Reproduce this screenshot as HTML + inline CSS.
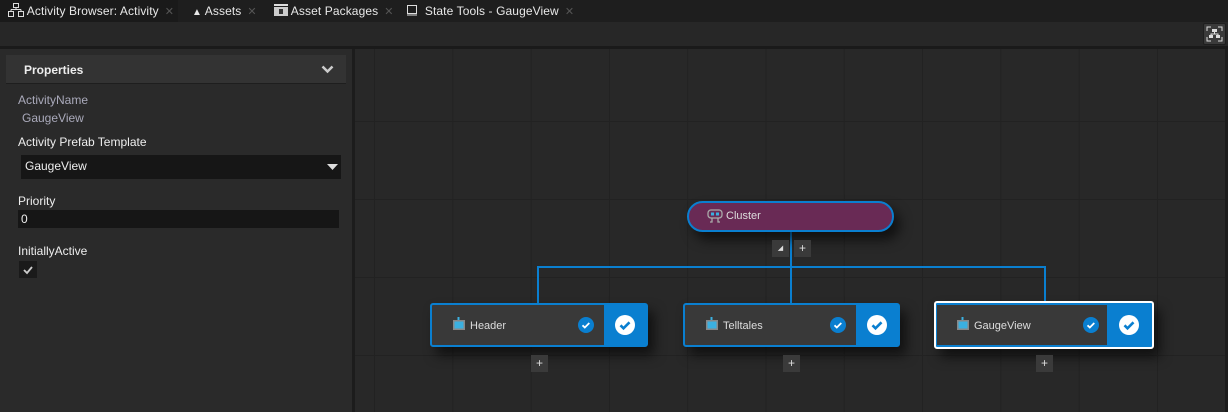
<!DOCTYPE html>
<html><head><meta charset="utf-8"><style>
*{margin:0;padding:0;box-sizing:border-box}
body{width:1228px;height:412px;background:#1e1e1e;font-family:"Liberation Sans",sans-serif;font-size:12px;color:#ddd;position:relative;overflow:hidden}
.abs{position:absolute}
.tab{position:absolute;top:0;height:22px;line-height:22px;font-size:12px;color:#e8e8e8;letter-spacing:0.1px}
.x{color:#555;font-size:11px;margin-left:6px}
.node{position:absolute;height:44px;border:2px solid #0a7fd0;border-radius:3px;background:#393939;box-shadow:6px 8px 12px rgba(0,0,0,.6)}
.node .blk{position:absolute;right:0;top:0;width:42px;height:40px;background:#0a7fd0}
.big{position:absolute;left:11px;top:10px;width:20px;height:20px;border-radius:50%;background:#fff}
.sm{position:absolute;width:16px;height:16px;border-radius:50%;background:#0a7fd0;top:12px}
.lbl{position:absolute;left:38px;top:15px;font-size:11px;color:#ddd}
.ic{position:absolute;left:20px;top:12px}
.plus{position:absolute;width:17px;height:17px;background:#3a3a3a;color:#ddd;font-size:12px;line-height:17px;text-align:center}
</style></head><body>
<!-- tabs -->
<div class="abs" style="left:0;top:0;width:178px;height:22px;background:#1a1a1a"></div>
<div class="tab" style="left:8px"><svg width="16" height="14" style="vertical-align:-2px" fill="none" stroke="#ddd"><rect x="5.5" y="0.5" width="5" height="4"/><path d="M8 4.5v2M3 6.5h10M3 6.5v2M13 6.5v2"/><rect x="0.5" y="8.5" width="5" height="5"/><rect x="10.5" y="8.5" width="5" height="5"/></svg> Activity Browser: Activity<span class="x">✕</span></div>
<div class="tab" style="left:192px"><span style="font-size:10px">▲</span> Assets<span class="x">✕</span></div>
<div class="tab" style="left:274px"><svg width="14" height="12" style="vertical-align:-1px"><rect x="0" y="0" width="14" height="2" fill="#ddd"/><rect x="0" y="3" width="14" height="9" fill="#ccc"/><rect x="5" y="5" width="4" height="5" fill="#333"/></svg> Asset Packages<span class="x">✕</span></div>
<div class="tab" style="left:406px"><svg width="12" height="12" style="vertical-align:-1px" fill="none" stroke="#ddd"><rect x="1.5" y="1.5" width="9" height="8"/><path d="M1 11h10"/></svg> &nbsp;State Tools - GaugeView<span class="x">✕</span></div>
<div class="abs" style="left:0;top:22px;width:1228px;height:24px;background:#272727"></div>
<div class="abs" style="left:0;top:46px;width:1228px;height:3px;background:#1a1a1a"></div>
<div class="abs" style="left:1203px;top:23px;width:23px;height:22px;background:#3a3a3a;border:1px solid #1e1e1e;border-radius:2px">
<svg width="21" height="20" fill="none" stroke="#ddd"><path d="M3 7V3h4M14 3h4v4M18 13v4h-4M7 17H3v-4"/><rect x="8" y="5" width="5" height="3" fill="#ddd" stroke="none"/><rect x="5" y="11" width="4" height="3" fill="#ddd" stroke="none"/><rect x="12" y="11" width="4" height="3" fill="#ddd" stroke="none"/><path d="M10.5 8v2M7 11V10h7v1"/></svg></div>
<!-- left panel -->
<div class="abs" style="left:0;top:49px;width:352px;height:363px;background:#2a2a2a"></div>
<div class="abs" style="left:6px;top:55px;width:340px;height:29px;background:#333;border-bottom:1px solid #1e1e1e"></div>
<div class="abs" style="left:24px;top:63px;font-weight:bold;font-size:12px;color:#eee">Properties</div>
<svg class="abs" style="left:321px;top:65px" width="13" height="9"><path d="M1.5 1.5l5 5 5-5" stroke="#ccc" stroke-width="2.5" fill="none"/></svg>
<div class="abs" style="left:18px;top:93px;color:#aab">ActivityName</div>
<div class="abs" style="left:22px;top:111px;color:#aab">GaugeView</div>
<div class="abs" style="left:18px;top:135px;color:#eee">Activity Prefab Template</div>
<div class="abs" style="left:21px;top:155px;width:320px;height:24px;background:#161616"></div>
<div class="abs" style="left:25px;top:159px;color:#eee">GaugeView</div>
<svg class="abs" style="left:327px;top:164px" width="11" height="6"><path d="M0 0h11L5.5 6z" fill="#ddd"/></svg>
<div class="abs" style="left:18px;top:194px;color:#eee">Priority</div>
<div class="abs" style="left:18px;top:210px;width:321px;height:18px;background:#161616"></div>
<div class="abs" style="left:21px;top:212px;color:#eee">0</div>
<div class="abs" style="left:18px;top:244px;color:#eee">InitiallyActive</div>
<div class="abs" style="left:19px;top:261px;width:18px;height:17px;background:#1a1a1a"><svg width="18" height="17"><path d="M5 9l3 3 5-6" stroke="#ccc" stroke-width="1.8" fill="none"/></svg></div>
<!-- divider -->
<div class="abs" style="left:352px;top:49px;width:3px;height:363px;background:#1c1c1c"></div>
<!-- canvas -->
<div class="abs" style="left:355px;top:49px;width:873px;height:363px;background-color:#282828;background-image:linear-gradient(90deg,#222 1px,transparent 1px),linear-gradient(#222 1px,transparent 1px);background-size:78.3px 78px;background-position:19px 72px"></div>
<div class="abs" style="left:1225px;top:49px;width:3px;height:363px;background:#1c1c1c"></div>
<!-- connectors -->
<div class="abs" style="left:790px;top:230px;width:2px;height:75px;background:#0a7fd0"></div>
<div class="abs" style="left:537px;top:266px;width:509px;height:2px;background:#0a7fd0"></div>
<div class="abs" style="left:537px;top:266px;width:2px;height:38px;background:#0a7fd0"></div>
<div class="abs" style="left:1044px;top:266px;width:2px;height:38px;background:#0a7fd0"></div>
<!-- cluster -->
<div class="abs" style="left:687px;top:201px;width:207px;height:31px;border:2px solid #0a7fd0;border-radius:16px;background:#692a55;box-shadow:6px 8px 12px rgba(0,0,0,.6)"></div>
<svg class="abs" style="left:707px;top:209px" width="16" height="15" fill="none" stroke="#aaa" stroke-width="1.3"><rect x="1" y="1" width="14" height="8" rx="3"/><rect x="4" y="3.5" width="3" height="3" fill="#3bb0e0" stroke="none"/><rect x="9" y="3.5" width="3" height="3" fill="#3bb0e0" stroke="none"/><path d="M5 9v4H3M11 9v4h2"/></svg>
<div class="abs" style="left:726px;top:210px;font-size:11px;color:#ddd">Cluster</div>
<div class="plus" style="left:772px;top:240px;font-size:7px">◢</div>
<div class="plus" style="left:794px;top:240px">+</div>
<!-- nodes -->
<div class="node" style="left:430px;top:303px;width:218px"><svg class="ic" width="14" height="15"><rect x="5.5" y="0" width="2" height="3" fill="#3bb0e0"/><rect x="1" y="3" width="12" height="10" fill="#888"/><rect x="2.5" y="4.5" width="9" height="7" fill="#3bb0e0"/></svg><div class="lbl">Header</div><div class="sm" style="left:146px"><svg width="16" height="16"><path d="M4.5 8.3l2.3 2.2 4.5-4.5" stroke="#fff" stroke-width="1.8" fill="none"/></svg></div><div class="blk"><div class="big"><svg width="20" height="20"><path d="M5.5 10.3l3 3 6-6" stroke="#0a7fd0" stroke-width="2.6" fill="none"/></svg></div></div></div>
<div class="node" style="left:683px;top:303px;width:217px"><svg class="ic" width="14" height="15"><rect x="5.5" y="0" width="2" height="3" fill="#3bb0e0"/><rect x="1" y="3" width="12" height="10" fill="#888"/><rect x="2.5" y="4.5" width="9" height="7" fill="#3bb0e0"/></svg><div class="lbl">Telltales</div><div class="sm" style="left:145px"><svg width="16" height="16"><path d="M4.5 8.3l2.3 2.2 4.5-4.5" stroke="#fff" stroke-width="1.8" fill="none"/></svg></div><div class="blk"><div class="big"><svg width="20" height="20"><path d="M5.5 10.3l3 3 6-6" stroke="#0a7fd0" stroke-width="2.6" fill="none"/></svg></div></div></div>
<div class="node" style="left:934px;top:301px;width:220px;height:48px;border-color:#fff;background:#0a7fd0"><div style="position:absolute;left:1px;top:2px;width:170px;height:40px;background:#393939"></div><svg class="ic" style="top:14px" width="14" height="15"><rect x="5.5" y="0" width="2" height="3" fill="#3bb0e0"/><rect x="1" y="3" width="12" height="10" fill="#888"/><rect x="2.5" y="4.5" width="9" height="7" fill="#3bb0e0"/></svg><div class="lbl" style="top:17px">GaugeView</div><div class="sm" style="left:147px;top:14px"><svg width="16" height="16"><path d="M4.5 8.3l2.3 2.2 4.5-4.5" stroke="#fff" stroke-width="1.8" fill="none"/></svg></div><div class="big" style="left:183px;top:12px"><svg width="20" height="20"><path d="M5.5 10.3l3 3 6-6" stroke="#0a7fd0" stroke-width="2.6" fill="none"/></svg></div></div>
<div class="plus" style="left:531px;top:355px">+</div>
<div class="plus" style="left:783px;top:355px">+</div>
<div class="plus" style="left:1036px;top:355px">+</div>
</body></html>
